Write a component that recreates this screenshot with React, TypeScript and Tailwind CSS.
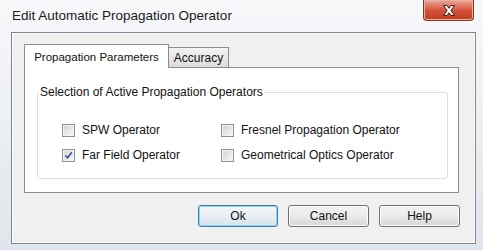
import React from "react";

const font = { fontFamily: '"Liberation Sans", Arial, sans-serif' };

function CheckBox({ checked }: { checked?: boolean }) {
  return (
    <span className="flex h-[13px] w-[13px] items-center justify-center border border-[#8e8f8f] bg-white">
      <span className="relative h-[11px] w-[11px] border border-[#f4f4f4] bg-gradient-to-br from-[#d4d4d4] to-[#f6f6f6]">
        {checked && (
          <svg className="absolute left-0 top-0" width="9" height="9" viewBox="0 0 9 9">
            <path d="M1.5 4.5 L3.5 6.8 L7.8 1.2" fill="none" stroke="#3b4f9e" strokeWidth="1.6" />
          </svg>
        )}
      </span>
    </span>
  );
}

function Option({ label, checked }: { label: string; checked?: boolean }) {
  return (
    <div className="flex h-[16px] items-center gap-[7px] text-[12px] text-[#111]">
      <CheckBox checked={checked} />
      <span>{label}</span>
    </div>
  );
}

function Button({ label, primary }: { label: string; primary?: boolean }) {
  return (
    <button
      className={
        "flex h-[22px] items-center justify-center rounded-[3px] border text-[12px] text-[#111] " +
        (primary
          ? "w-[80px] border-[#3c7fb1] bg-gradient-to-b from-[#f4f8fb] via-[#e8eef3] to-[#d8e2ea] shadow-[inset_0_0_0_1px_#8fd3f5]"
          : "w-[81px] border-[#707070] bg-gradient-to-b from-[#f2f2f2] via-[#ebebeb] to-[#d6d6d6] shadow-[inset_0_0_0_1px_#fcfcfc]")
      }
    >
      {label}
    </button>
  );
}

export default function App() {
  return (
    <div
      style={font}
      className="flex h-[250px] w-[483px] flex-col overflow-hidden bg-gradient-to-b from-[#f7f8fa] via-[#eceff3] to-[#dfe5ec]"
    >
      {/* Title bar */}
      <div className="flex h-[32px] shrink-0 items-start">
        <div className="pl-[12px] pt-[7px] text-[13.5px] leading-[17px] text-[#1a1a1a]">
          Edit Automatic Propagation Operator
        </div>
        <div className="ml-auto mr-[9px] flex h-[21px] w-[51px] items-center justify-center rounded-b-[4px] border border-t-0 border-[#8a3324] bg-gradient-to-b from-[#e9a899] via-[#d3543c] to-[#c23a1e] shadow-[inset_0_0_0_1px_#eab0a2]">
          <svg width="16" height="13" viewBox="0 0 16 13">
            <path
              d="M2.5 1.5 L6 1.5 L8 4.3 L10 1.5 L13.5 1.5 L9.8 6.5 L13.5 11.5 L10 11.5 L8 8.7 L6 11.5 L2.5 11.5 L6.2 6.5 Z"
              fill="#fff"
              stroke="#4a1e16"
              strokeWidth="1"
            />
          </svg>
        </div>
      </div>

      {/* Client area */}
      <div className="ml-[11px] flex h-[212px] w-[465px] shrink-0 flex-col border border-[#7f868e] bg-[#f0f0f0] shadow-[inset_0_0_0_1px_#fbfbfb]">
        <div className="ml-[12px] mt-[11px] flex flex-col">
          {/* Tabs */}
          <div className="flex h-[23px] items-end">
            <div className="relative z-10 -mb-px flex h-[24px] w-[145px] items-start justify-center border border-b-0 border-[#898c95] bg-white pt-[4px] text-[11.5px] text-[#111]">
              Propagation Parameters
            </div>
            <div className="flex h-[20px] w-[60px] items-center justify-center border border-b-0 border-l-0 border-[#898c95] bg-gradient-to-b from-[#f3f3f3] to-[#dcdcdc] text-[12px] text-[#111]">
              Accuracy
            </div>
          </div>

          {/* Tab panel */}
          <div className="flex h-[126px] w-[435px] flex-col border border-[#898c95] bg-white pl-[12px] pt-[17px]">
            <fieldset className="h-[94px] w-[411px] rounded-[3px] border border-[#d5dfe5]">
              <legend className="ml-[1px] px-[1px] text-[12px] leading-[15px] text-[#111]">
                Selection of Active Propagation Operators
              </legend>
              <div className="ml-[24px] mt-[22px] grid grid-cols-[159px_1fr] gap-y-[9px]">
                <Option label="SPW Operator" />
                <Option label="Fresnel Propagation Operator" />
                <Option label="Far Field Operator" checked />
                <Option label="Geometrical Optics Operator" />
              </div>
            </fieldset>
          </div>
        </div>

        {/* Buttons */}
        <div className="mr-[15px] mt-[12px] flex justify-end gap-[10px]">
          <Button label="Ok" primary />
          <Button label="Cancel" />
          <Button label="Help" />
        </div>
      </div>
    </div>
  );
}
